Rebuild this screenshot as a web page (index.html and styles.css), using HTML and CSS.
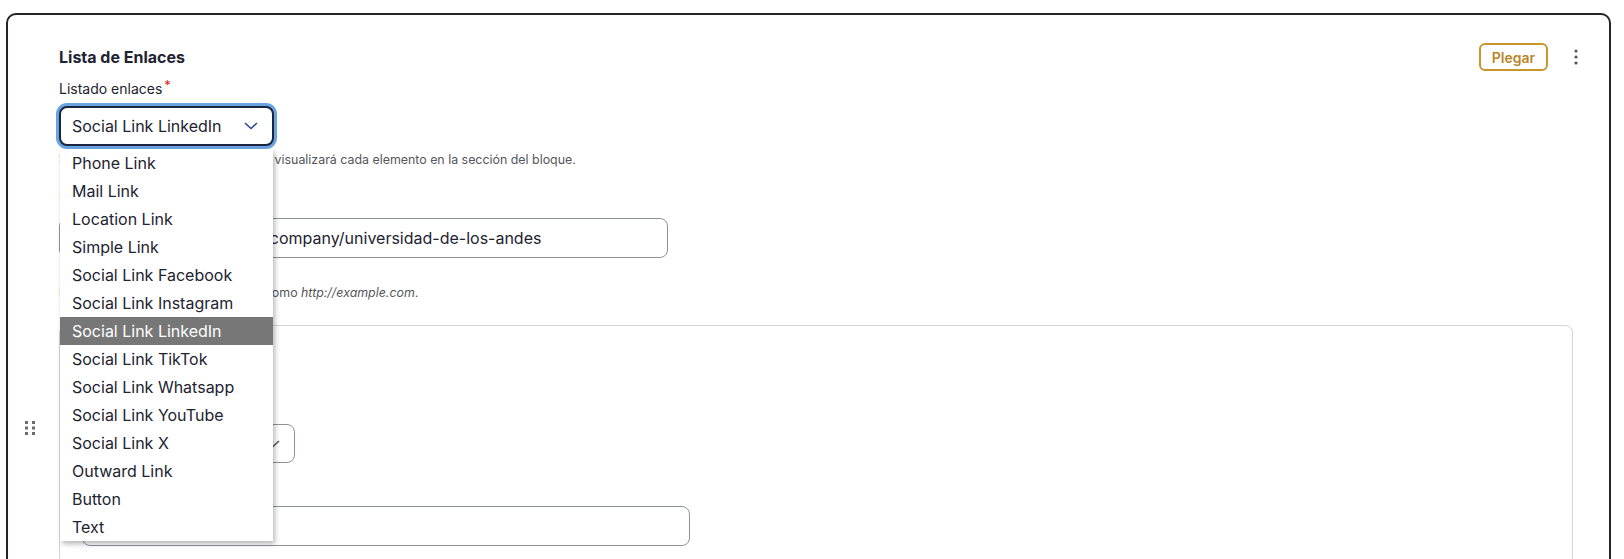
FILE: index.html
```html
<!DOCTYPE html>
<html lang="es">
<head>
    <meta charset="UTF-8">
    <meta name="viewport" content="width=device-width, initial-scale=1.0">
    <title>Lista de Enlaces</title>
    <link rel="stylesheet" href="styles.css">
</head>
<body>
    <div class="page">
        <div class="card">
            <!-- asa para arrastrar -->
            <div class="drag-col">
                <svg class="drag-handle" width="10" height="14" viewBox="0 0 10 14">
                    <rect x="0" y="0" width="3" height="3" />
                    <rect x="7" y="0" width="3" height="3" />
                    <rect x="0" y="5.5" width="3" height="3" />
                    <rect x="7" y="5.5" width="3" height="3" />
                    <rect x="0" y="11" width="3" height="3" />
                    <rect x="7" y="11" width="3" height="3" />
                </svg>
            </div>

            <div class="card-body">
                <div class="card-header">
                    <h2 class="card-title">Lista de Enlaces</h2>
                    <button class="btn-fold">Plegar</button>
                    <button class="btn-more" aria-label="Más">
                        <svg width="4" height="16" viewBox="0 0 4 16">
                            <circle cx="2" cy="2" r="1.6" />
                            <circle cx="2" cy="8" r="1.6" />
                            <circle cx="2" cy="14" r="1.6" />
                        </svg>
                    </button>
                </div>

                <label class="field-label">Listado enlaces<span class="required">*</span></label>
                <div class="select-wrap">
                    <div class="select select-focus">
                        <span>Social Link LinkedIn</span>
                        <svg class="chevron chevron-blue" width="14" height="8" viewBox="0 0 14 8">
                            <path d="M1 1l6 5.5L13 1" />
                        </svg>
                    </div>

                    <!-- lista desplegada -->
                    <ul class="dropdown">
                        <li>Phone Link</li>
                        <li>Mail Link</li>
                        <li>Location Link</li>
                        <li>Simple Link</li>
                        <li>Social Link Facebook</li>
                        <li>Social Link Instagram</li>
                        <li class="active">Social Link LinkedIn</li>
                        <li>Social Link TikTok</li>
                        <li>Social Link Whatsapp</li>
                        <li>Social Link YouTube</li>
                        <li>Social Link X</li>
                        <li>Outward Link</li>
                        <li>Button</li>
                        <li>Text</li>
                    </ul>
                </div>
                <p class="help">Seleccione el tipo de enlace y así se visualizará cada elemento en la sección del bloque.</p>

                <label class="field-label field-url">URL</label>
                <div class="input input-url">https://www.linkedin.com/company/universidad-de-los-andes</div>
                <p class="help help-url">Introduzca la dirección externa, tal como <em>http://example.com</em>.</p>

                <div class="subform">
                    <h3 class="subform-title">Icono</h3>
                    <label class="field-label sub-label">Estilo</label>
                    <div class="select select-small">
                        <span>Ninguno</span>
                        <svg class="chevron" width="14" height="8" viewBox="0 0 14 8">
                            <path d="M1 1l6 5.5L13 1" />
                        </svg>
                    </div>
                    <label class="field-label sub-label2">Texto del enlace</label>
                    <div class="input input-text"></div>
                </div>
            </div>
        </div>
    </div>
</body>
</html>
```

FILE: styles.css
```css
* {
    box-sizing: border-box;
    margin: 0;
    padding: 0;
}
body, html {
    height: 100%;
    overflow: hidden;
    background-color: #ffffff;
    font-family: Inter, "Noto Sans", Arial, sans-serif;
    color: #222330;
}
.page {
    padding: 13px 13px 0 6px;
}
.card {
    display: flex;
    min-height: 700px;
    border: 2px solid #232429;
    border-radius: 10px;
    background-color: #ffffff;
}
.drag-col {
    width: 51px;
    flex-shrink: 0;
    padding: 406px 0 0 17px;
}
.drag-handle {
    display: block;
    fill: #6b6b70;
}
.card-body {
    flex: 1;
    padding: 28px 21px 0 0;
}
.card-header {
    display: flex;
    align-items: center;
    height: 28px;
}
.card-title {
    flex: 1;
    font-size: 16px;
    font-weight: 700;
    color: #222330;
}
.btn-fold {
    width: 69px;
    height: 28px;
    border: 2px solid #c9962b;
    border-radius: 6px;
    background: #ffffff;
    color: #b7862a;
    font-family: inherit;
    font-size: 14px;
    font-weight: 600;
    cursor: pointer;
}
.btn-more {
    width: 24px;
    height: 28px;
    margin-left: 16px;
    border: none;
    background: none;
    display: flex;
    align-items: center;
    justify-content: center;
    cursor: pointer;
}
.btn-more svg {
    fill: #55565b;
}
.field-label {
    display: block;
    margin-top: 5px;
    margin-bottom: 8px;
    font-size: 14px;
    line-height: 18px;
    color: #222330;
}
.required {
    color: #d72222;
    font-size: 13px;
    margin-left: 2px;
    vertical-align: 4px;
}
.select-wrap {
    position: relative;
    width: 215px;
}
.select {
    display: flex;
    align-items: center;
    justify-content: space-between;
    height: 40px;
    padding: 0 14px 0 12px;
    border: 1px solid #8e929c;
    border-radius: 8px;
    font-size: 16px;
    color: #222330;
    background-color: #ffffff;
}
.select-focus {
    border: 2px solid #1b2540;
    padding-left: 11px;
    box-shadow: 0 0 0 3px #6aa4e0;
}
.chevron {
    fill: none;
    stroke: #55565b;
    stroke-width: 1.6;
}
.chevron-blue {
    stroke: #2b4c9a;
}
.dropdown {
    position: absolute;
    top: 43px;
    left: 1px;
    width: 213px;
    list-style: none;
    background-color: #ffffff;
    box-shadow: 2px 3px 5px rgba(0, 0, 0, 0.28);
    z-index: 10;
}
.dropdown li {
    height: 28px;
    line-height: 28px;
    padding-left: 12px;
    font-size: 16px;
    color: #222330;
    white-space: nowrap;
}
.dropdown li.active {
    background-color: #777777;
    color: #ffffff;
}
.help {
    margin-top: 6px;
    font-size: 12.4px;
    line-height: 16px;
    color: #55565b;
}
.field-url {
    margin-top: 22px;
    margin-bottom: 10px;
}
.input {
    height: 40px;
    padding: 0 12px;
    border: 1px solid #8e929c;
    border-radius: 8px;
    font-size: 16px;
    line-height: 38px;
    color: #222330;
    white-space: nowrap;
    overflow: hidden;
}
.input-url {
    width: 609px;
}
.help-url {
    margin-top: 27px;
}
.subform {
    margin-top: 24px;
    margin-right: 15px;
    min-height: 300px;
    padding: 22px 22px;
    border: 1px solid #d3d4d9;
    border-radius: 8px;
}
.subform-title {
    font-size: 15px;
    font-weight: 700;
    line-height: 20px;
}
.sub-label {
    margin-top: 30px;
}
.select-small {
    width: 213px;
    height: 39px;
}
.sub-label2 {
    margin-top: 19px;
    margin-bottom: 6px;
}
.input-text {
    width: 608px;
}
```
